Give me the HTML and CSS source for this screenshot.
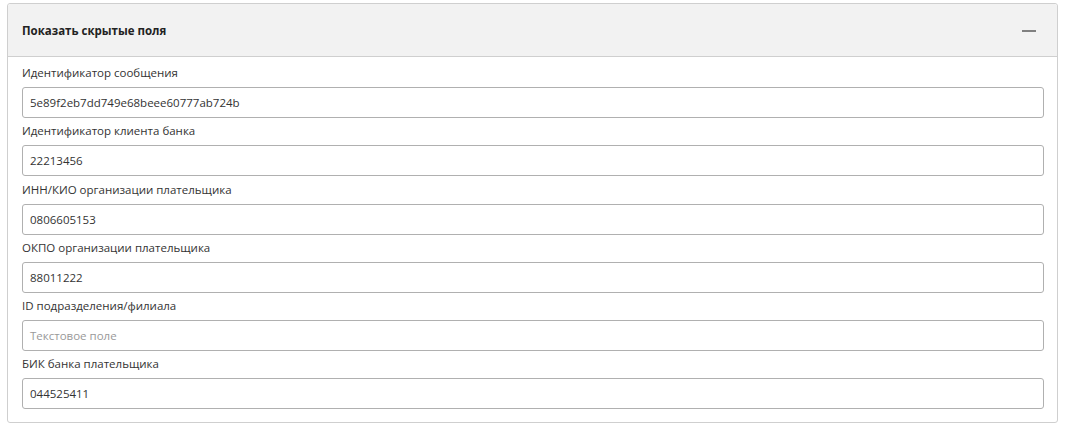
FILE: index.html
```html
<!DOCTYPE html>
<html lang="ru">
<head>
<meta charset="utf-8">
<link rel="stylesheet" href="styles.css">
</head>
<body>
<div class="card">
  <div class="card-header">
    <span class="title">Показать скрытые поля</span>
    <span class="collapse"></span>
  </div>
  <div class="card-body">
    <div class="field">
      <label>Идентификатор сообщения</label>
      <div class="input">5e89f2eb7dd749e68beee60777ab724b</div>
    </div>
    <div class="field">
      <label>Идентификатор клиента банка</label>
      <div class="input">22213456</div>
    </div>
    <div class="field">
      <label>ИНН/КИО организации плательщика</label>
      <div class="input">0806605153</div>
    </div>
    <div class="field">
      <label>ОКПО организации плательщика</label>
      <div class="input">88011222</div>
    </div>
    <div class="field">
      <label>ID подразделения/филиала</label>
      <div class="input placeholder">Текстовое поле</div>
    </div>
    <div class="field">
      <label>БИК банка плательщика</label>
      <div class="input">044525411</div>
    </div>
  </div>
</div>
</body>
</html>
```

FILE: styles.css
```css
* { box-sizing: border-box; }
html, body { margin: 0; padding: 0; background: #fff; }
body {
  font-family: "Open Sans", "Noto Sans", sans-serif;
  font-size: 11.5px;
  color: #333;
  padding: 3px 0 0 7px;
}
.card {
  width: 1051px;
  border: 1px solid #cfcfcf;
  border-radius: 3px;
  background: #fff;
}
.card-header {
  height: 53px;
  background: #f2f2f2;
  border-bottom: 1px solid #cfcfcf;
  display: flex;
  align-items: center;
  justify-content: space-between;
  padding: 0 21px 0 14px;
  border-radius: 3px 3px 0 0;
}
.title {
  font-weight: 700;
  color: #222;
  padding-top: 1px;
}
.collapse {
  width: 14px;
  height: 2px;
  background: #808080;
  margin-top: 1px;
}
.card-body {
  padding: 7px 13px 13px 14px;
  display: flex;
  flex-direction: column;
  gap: 4.25px;
}
.field {
  display: flex;
  flex-direction: column;
  gap: 5px;
}
.field label {
  line-height: 18px;
  height: 18px;
}
.input {
  height: 31px;
  border: 1px solid #b0b0b0;
  border-radius: 3px;
  padding: 0 7px;
  display: flex;
  align-items: center;
  color: #333;
}
.placeholder { color: #999; }
```
